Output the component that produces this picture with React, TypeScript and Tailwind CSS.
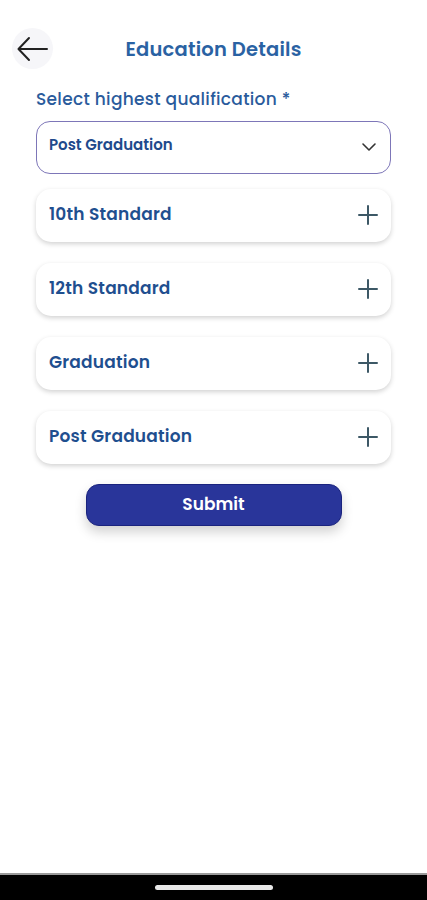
import React from "react";

const font = { fontFamily: "Poppins, Inter, 'Noto Sans', sans-serif" };

function Plus() {
  return (
    <svg width="20" height="20" viewBox="0 0 20 20" fill="none" stroke="#3d5866" strokeWidth="2" strokeLinecap="round">
      <path d="M10 1v18M1 10h18" />
    </svg>
  );
}

function Card({ label }: { label: string }) {
  return (
    <div className="flex h-[53px] items-center justify-between rounded-[15px] bg-white pl-[13px] pr-[13px] shadow-[0_2px_5px_rgba(0,0,0,0.18)]">
      <span className="text-[17px] font-semibold tracking-[0.2px] text-[#1f4f8f]">{label}</span>
      <Plus />
    </div>
  );
}

export default function App() {
  return (
    <div className="relative flex h-[900px] w-[427px] flex-col bg-white" style={font}>
      <div className="relative flex h-[72px] items-end justify-center pb-[8px] pt-[28px]">
        <div className="absolute left-[12px] top-[28px] flex h-[41px] w-[41px] items-center justify-center rounded-full bg-[#f6f6f9]">
          <svg width="34" height="26" viewBox="0 0 34 26" fill="none" stroke="#222" strokeWidth="2" strokeLinecap="round" strokeLinejoin="round">
            <path d="M31 13H3M13 2L2.5 13L13 24" />
          </svg>
        </div>
        <h1 className="text-[19.5px] font-semibold tracking-[0.2px] text-[#2a62a3]">Education Details</h1>
      </div>
      <div className="flex flex-col px-[36px]">
        <div className="mt-[15px] text-[17px] font-medium tracking-[0.3px] text-[#2a5b9c]">Select highest qualification *</div>
        <div className="mt-[8px] flex h-[53px] items-center justify-between rounded-[14px] border border-[#7d76b8] pl-[12px] pr-[13px]">
          <span className="mb-[4px] text-[15px] font-semibold text-[#1f4a8c]">Post Graduation</span>
          <svg width="16" height="10" viewBox="0 0 16 10" fill="none" stroke="#333" strokeWidth="1.6" strokeLinecap="round" strokeLinejoin="round">
            <path d="M2 2l6 6 6-6" />
          </svg>
        </div>
        <div className="mt-[15px] flex flex-col gap-[21px]">
          <Card label="10th Standard" />
          <Card label="12th Standard" />
          <Card label="Graduation" />
          <Card label="Post Graduation" />
        </div>
        <div className="mt-[20px] flex justify-center">
          <button className="flex h-[42px] w-[256px] items-center justify-center rounded-[13px] border border-[#1a237e] bg-[#29359a] text-[17px] font-semibold text-white shadow-[0_6px_12px_rgba(0,0,0,0.18)]">
            Submit
          </button>
        </div>
      </div>
      <div className="mt-auto flex h-[27px] items-center justify-center border-t-2 border-[#9a9a9a] bg-black">
        <div className="h-[5px] w-[118px] rounded-full bg-[#e8e8e8]" />
      </div>
    </div>
  );
}
